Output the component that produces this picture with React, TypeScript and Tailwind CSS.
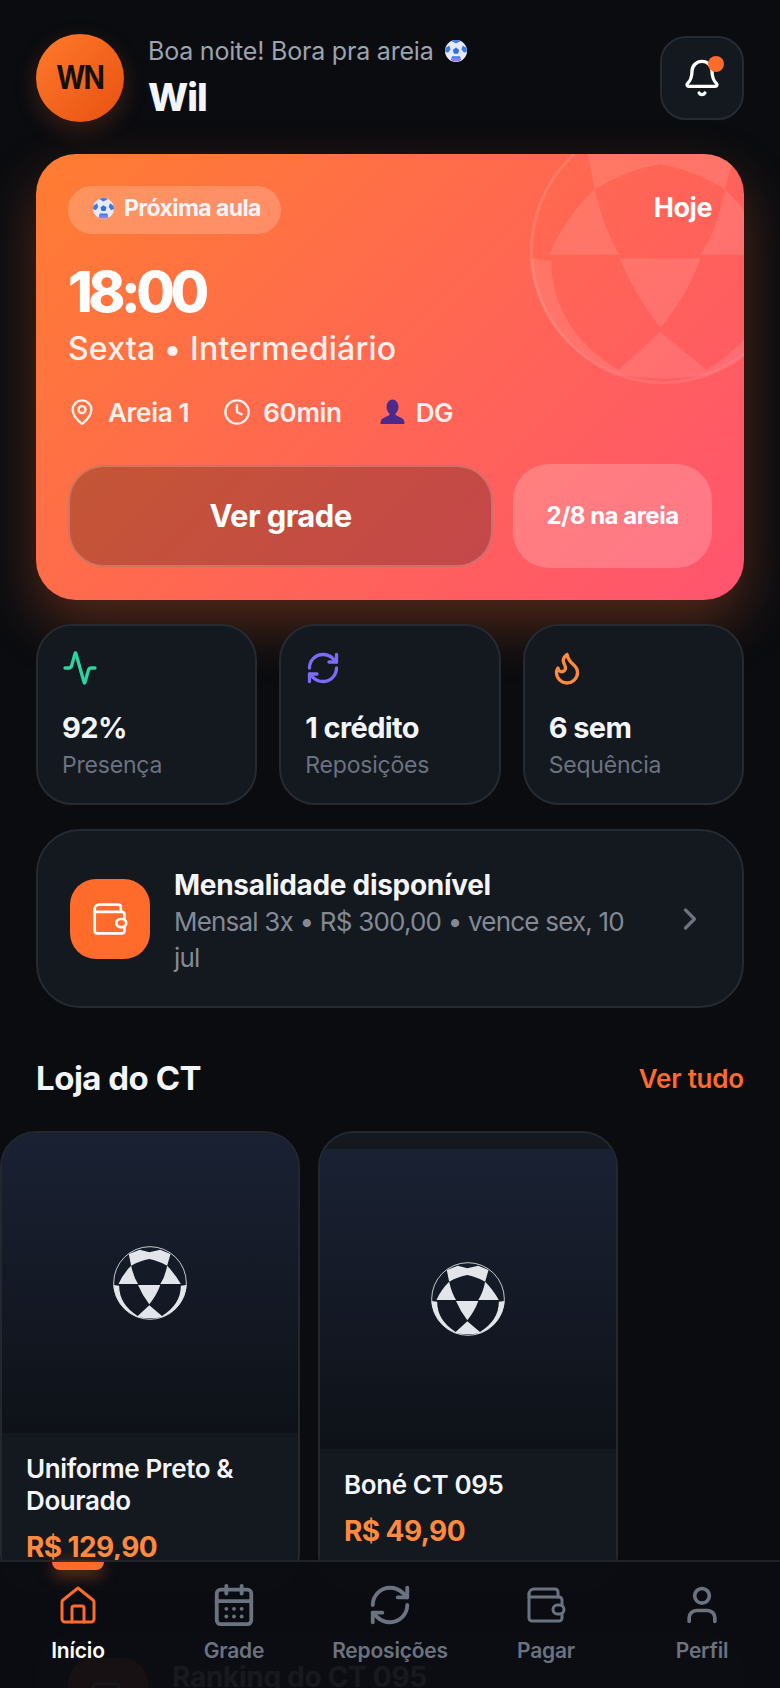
import React from "react"
import { Activity, Bell, CalendarDays, ChevronRight, Clock, Flame, MapPin, RefreshCw, User } from "lucide-react"

// same ball is used as the hero watermark and as the product placeholder
function Ball({ className }: { className?: string }) {
    return (
        <svg viewBox="0 0 216 216" className={className} fill="currentColor">
            <circle cx="108" cy="108" r="106" fill="none" stroke="currentColor" strokeWidth="2.5" />
            <path d="M46 23L78 11L106 18L138 11L168 23L158 58Q130 42 106 38Q80 42 53 58Z" />
            <path d="M53 58Q30 80 16 111L73 111Q60 90 53 58Z" />
            <path d="M158 58Q180 80 198 111L138 111Q152 90 158 58Z" />
            <path d="M73 114L138 114Q128 143 106 170Q85 143 73 114Z" />
            <path d="M1 114L18 116Q18 170 72 204L106 173L143 204Q198 170 198 116L215 114A108 108 0 0 1 143 208Q108 214 73 208A108 108 0 0 1 1 114Z" />
        </svg>
    )
}

function BallEmoji({ className }: { className?: string }) {
    return (
        <svg viewBox="0 0 24 24" className={className}>
            <circle cx="12" cy="12" r="11" fill="#e8ebf7" />
            <path d="M12 8.5l3.2 2.4-1.2 3.8h-4l-1.2-3.8z" fill="#2f6fe0" />
            <path d="M12 1a11 11 0 0 1 4.600 1L12 4.600 7.400 2A11 11 0 0 1 12 1zM1.600 9l3.600-2.400 1.400 3.600-2.600 3.600L1 12.500zM22.400 9l-3.600-2.400-1.400 3.600 2.600 3.600 3-1.300zM7 21l1-3.800h8l1 3.800a11 11 0 0 1-10 0z" fill="#3b7be8" />
            <path d="M7 21a11 11 0 0 0 10 0l-1-2H8z" fill="#8b7cf0" />
        </svg>
    )
}

function PersonEmoji({ className }: { className?: string }) {
    return (
        <svg viewBox="0 0 24 26" className={className} fill="#4c2a8c">
            <ellipse cx="12" cy="8" rx="6" ry="7.500" />
            <path d="M9 13h6v3l7 3.500c1 .6 2 2.500 2 5.500H0c0-3 1-4.900 2-5.500L9 16z" />
        </svg>
    )
}

function HomeIcon({ className }: { className?: string }) {
    return (
        <svg viewBox="0 0 40 40" className={className} fill="none" stroke="currentColor" strokeWidth="3" strokeLinejoin="round" strokeLinecap="round">
            <path d="M20 3L35 15a2.500 2.500 0 0 1 1 2.500V34a3 3 0 0 1-3 3H7a3 3 0 0 1-3-3V17.500A2.500 2.500 0 0 1 5 15z" />
            <path d="M14 37V23a2 2 0 0 1 2-2h8a2 2 0 0 1 2 2v14" />
        </svg>
    )
}

function WalletIcon({ className }: { className?: string }) {
    return (
        <svg viewBox="0 0 40 40" className={className} fill="none" stroke="currentColor" strokeWidth="3" strokeLinejoin="round" strokeLinecap="round">
            <path d="M3 9V33a3 3 0 0 0 3 3h27a3 3 0 0 0 3-3V29" />
            <path d="M36 20V15a3 3 0 0 0-3-3H3" />
            <path d="M3 9a5 5 0 0 1 5-5h21a3 3 0 0 1 3 3v5" />
            <rect x="27" y="20" width="11" height="9" rx="4.500" />
        </svg>
    )
}

const stats = [
    { icon: <Activity className="w-[36px] h-[36px] text-[#2dd4a0]" strokeWidth={2.2} />, value: "92%", label: "Presença" },
    { icon: <RefreshCw className="w-[36px] h-[36px] text-[#7c6cf5]" strokeWidth={2.2} />, value: "1 crédito", label: "Reposições" },
    { icon: <Flame className="w-[36px] h-[36px] text-[#ff8a3d]" strokeWidth={2.2} />, value: "6 sem", label: "Sequência" },
]

const navItems = [
    { icon: <HomeIcon className="w-[40px] h-[40px]" />, label: "Início", active: true },
    { icon: <CalendarDays className="w-[46px] h-[46px]" strokeWidth={2} />, label: "Grade" },
    { icon: <RefreshCw className="w-[46px] h-[46px]" strokeWidth={2} />, label: "Reposições" },
    { icon: <WalletIcon className="w-[40px] h-[40px]" />, label: "Pagar" },
    { icon: <User className="w-[44px] h-[44px]" strokeWidth={2} />, label: "Perfil" },
]

export default function App() {
    return (
        <div className="relative w-[780px] h-[1688px] overflow-hidden bg-[#0a0c10] text-[#f3f5f9] font-['Inter',sans-serif]">
            <div className="px-[36px] pt-[34px]">
                {/* Header */}
                <header className="flex items-center h-[88px]">
                    <div className="w-[88px] h-[88px] rounded-full bg-gradient-to-br from-[#ff7a2b] to-[#e8500f] shadow-[0_8px_24px_rgba(255,107,43,0.2)] flex items-center justify-center text-[#14100c] text-[33px] font-bold">
                        <span className="scale-x-[0.85] tracking-[-2px]">WN</span>
                    </div>
                    <div className="ml-[24px] flex-1">
                        <div className="flex items-center gap-[10px] text-[25px] leading-[30px] text-[#9ca3af] tracking-[-0.2px]">
                            Boa noite! Bora pra areia <BallEmoji className="w-[24px] h-[24px]" />
                        </div>
                        <div className="mt-[8px] text-[38px] leading-[46px] font-extrabold tracking-[-1px]">Wil</div>
                    </div>
                    <button className="relative w-[84px] h-[84px] rounded-[26px] bg-[#14181f] border-2 border-[#262a31] flex items-center justify-center">
                        <Bell className="w-[40px] h-[40px] text-white" strokeWidth={2} />
                        <span className="absolute left-[46px] top-[18px] w-[16px] h-[16px] rounded-full bg-[#ff6b2b]" />
                    </button>
                </header>

                {/* Next class */}
                <section className="relative mt-[32px] h-[446px] rounded-[40px] overflow-hidden bg-[linear-gradient(135deg,#ff7d32,#ff6555_55%,#ff5470)] shadow-[0_24px_56px_rgba(255,107,43,0.3)] px-[32px] pt-[32px]">
                    <Ball className="absolute left-[493px] top-[-37px] w-[268px] h-[268px] text-white/[0.11]" />
                    <div className="relative flex items-center justify-between">
                        <div className="flex items-center gap-[9px] h-[48px] pl-[24px] pr-[20px] pb-[3px] rounded-full bg-white/20 text-[23px] font-bold tracking-[-0.6px]">
                            <BallEmoji className="w-[23px] h-[23px]" /> Próxima aula
                        </div>
                        <div className="pb-[3px] text-[27px] font-bold tracking-[-0.5px] text-white">Hoje</div>
                    </div>
                    <div className="relative mt-[24px] text-[56px] leading-[68px] font-extrabold text-white tracking-[-4.5px]">18:00</div>
                    <div className="relative mt-[3px] text-[32px] leading-[40px] font-medium text-white/90 tracking-[0.2px]">Sexta • Intermediário</div>
                    <div className="relative mt-[23px] flex items-center h-[40px] text-[26px] font-semibold text-white/90 tracking-[-0.3px]">
                        <MapPin className="w-[28px] h-[28px] mr-[12px]" strokeWidth={2} />
                        Areia 1
                        <Clock className="w-[28px] h-[28px] ml-[34px] mr-[12px]" strokeWidth={2} />
                        60min
                        <PersonEmoji className="w-[25px] h-[26px] ml-[38px] mr-[11px]" />
                        DG
                    </div>
                    <div className="relative mt-[32px] flex items-center gap-[20px]">
                        <button className="w-[425px] h-[102px] rounded-[36px] bg-black/[0.23] border-2 border-white/20 text-[31px] font-bold tracking-[-0.6px] text-white">
                            Ver grade
                        </button>
                        <div className="flex-1 h-[104px] rounded-[36px] bg-white/20 flex items-center justify-center text-[24px] font-bold tracking-[-0.5px] text-white">
                            2/8 na areia
                        </div>
                    </div>
                </section>

                {/* Stats */}
                <section className="relative mt-[24px] grid grid-cols-3 gap-[22px]">
                    {stats.map((s) => (
                        <div key={s.label} className="h-[181px] rounded-[36px] bg-[#14181f] border-2 border-[#262a31] px-[24px] pt-[24px]">
                            {s.icon}
                            <div className="mt-[24px] text-[29px] leading-[36px] font-bold tracking-[-0.6px]">{s.value}</div>
                            <div className="mt-[3px] text-[23px] leading-[32px] text-[#6b7280] tracking-[-0.2px]">{s.label}</div>
                        </div>
                    ))}
                </section>

                {/* Payment */}
                <section className="mt-[24px] h-[179px] rounded-[44px] bg-[#14181f] border-2 border-[#262a31] pl-[32px] pr-[34px] flex items-center">
                    <div className="w-[80px] h-[80px] rounded-[26px] bg-[#ff6b2b] flex items-center justify-center shrink-0 text-white">
                        <WalletIcon className="w-[36px] h-[36px]" />
                    </div>
                    <div className="ml-[24px] flex-1 pt-[5px]">
                        <div className="text-[28px] leading-[38px] font-bold tracking-[-0.3px]">Mensalidade disponível</div>
                        <div className="text-[26px] leading-[36px] text-[#838a96] tracking-[-0.8px]">Mensal 3x • R$ 300,00 • vence sex, 10 jul</div>
                    </div>
                    <ChevronRight className="ml-[30px] w-[36px] h-[36px] text-[#6b7280] shrink-0" strokeWidth={2.2} />
                </section>

                {/* Store */}
                <div className="mt-[48px] flex items-center justify-between">
                    <h2 className="text-[33px] leading-[44px] font-bold tracking-[-0.5px]">Loja do CT</h2>
                    <span className="text-[26px] font-semibold text-[#ff6b2b] tracking-[-0.2px]">Ver tudo</span>
                </div>
            </div>

            <div className="mt-[31px] flex items-stretch gap-[18px]">
                <article className="w-[300px] rounded-[36px] overflow-hidden bg-[#14181f] border-2 border-[#23272e] flex flex-col">
                    <div className="h-[300px] bg-gradient-to-b from-[#1a2133] to-[#0e1218] flex items-center justify-center">
                        <Ball className="w-[74px] h-[74px] text-[#e2e5ea]" />
                    </div>
                    <div className="px-[24px] pt-[20px] pb-[24px]">
                        <div className="text-[26px] leading-[32px] font-semibold tracking-[-0.4px]">Uniforme Preto &amp; Dourado</div>
                        <div className="mt-[12px] text-[28px] leading-[36px] font-bold text-[#ff8a3d] tracking-[-0.6px]">R$ 129,90</div>
                    </div>
                </article>
                <article className="w-[300px] rounded-[36px] overflow-hidden bg-[#14181f] border-2 border-[#23272e] flex flex-col justify-center">
                    <div className="h-[300px] bg-gradient-to-b from-[#1a2133] to-[#0e1218] flex items-center justify-center">
                        <Ball className="w-[74px] h-[74px] text-[#e2e5ea]" />
                    </div>
                    <div className="px-[24px] pt-[20px] pb-[24px]">
                        <div className="text-[26px] leading-[32px] font-semibold tracking-[-0.4px]">Boné CT 095</div>
                        <div className="mt-[12px] text-[28px] leading-[36px] font-bold text-[#ff8a3d] tracking-[-0.6px]">R$ 49,90</div>
                    </div>
                </article>
            </div>

            {/* Ranking card, mostly hidden behind the nav */}
            <div className="mx-[36px] mt-[41px] rounded-[44px] bg-[#14181f] pl-[32px] pt-[26px] flex h-[180px]">
                <div className="w-[80px] h-[80px] rounded-[26px] bg-[#ff6b2b] shrink-0 flex items-center justify-center text-white">
                    <WalletIcon className="w-[36px] h-[36px]" />
                </div>
                <div className="ml-[24px] text-[28px] leading-[38px] font-bold tracking-[-0.3px]">Ranking do CT 095</div>
            </div>

            {/* Bottom nav */}
            <nav className="absolute left-0 right-0 bottom-0 h-[128px] bg-[#0b0d12]/95 border-t-2 border-[#1f2329] grid grid-cols-5">
                {navItems.map((item) => (
                    <div key={item.label} className={`relative flex flex-col items-center pt-[20px] ${item.active ? "text-[#ff6b2b]" : "text-[#6b7280]"}`}>
                        {item.active && (
                            <span className="absolute top-0 left-1/2 -translate-x-1/2 w-[52px] h-[8px] rounded-b-[8px] bg-[#ff6b2b] shadow-[0_4px_16px_rgba(255,107,43,0.6)]" />
                        )}
                        <div className="h-[46px] flex items-center justify-center">{item.icon}</div>
                        <span className={`mt-[9px] text-[21px] leading-[28px] font-semibold tracking-[-0.2px] ${item.active ? "text-white" : ""}`}>{item.label}</span>
                    </div>
                ))}
            </nav>
        </div>
    )
}
